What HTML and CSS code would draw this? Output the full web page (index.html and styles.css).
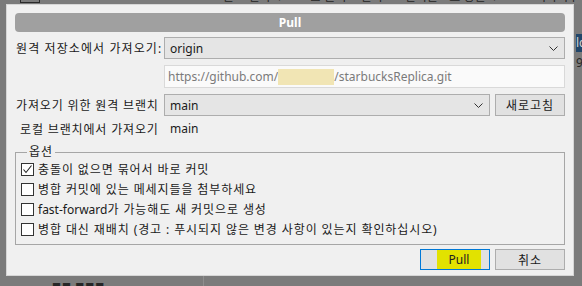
FILE: index.html
```html
<!DOCTYPE html>
<html lang="ko">
<head>
    <meta charset="UTF-8">
    <title>Pull</title>
    <link rel="stylesheet" href="styles.css">
</head>
<body>
    <!-- dimmed app window behind the dialog -->
    <div class="backdrop">
        <span class="bd-text bd-t1">모든 브랜치 ∨</span>
        <span class="bd-text bd-t2">☑ 원격 브랜치</span>
        <span class="bd-text bd-t3">날짜순으로 정렬 ∨</span>
        <span class="bd-text bd-t4">기다려주</span>
        <span class="bd-box"></span>
        <span class="bd-sel">lc</span>
        <span class="bd-text bd-t5">9</span>
        <span class="bd-line"></span>
        <span class="bd-text bd-t6">■■ ■■■</span>
    </div>

    <div class="dialog">
        <div class="titlebar">Pull</div>

        <div class="form-row row-remote">
            <label class="row-label">원격 저장소에서 가져오기:</label>
            <div class="combo">
                <span>origin</span>
                <svg class="chevron" width="9" height="5" viewBox="0 0 9 5"><polyline points="0.5,0.5 4.5,4.5 8.5,0.5" fill="none" stroke="#333" stroke-width="1"/></svg>
            </div>
        </div>

        <div class="form-row row-url">
            <span></span>
            <div class="url-box">
                <span>https://github.com/</span><span class="masked"></span><span>/starbucksReplica.git</span>
            </div>
        </div>

        <div class="form-row row-branch">
            <label class="row-label label-tight">가져오기 위한 원격 브랜치</label>
            <div class="branch-line">
                <div class="combo combo-branch">
                    <span>main</span>
                    <svg class="chevron" width="9" height="5" viewBox="0 0 9 5"><polyline points="0.5,0.5 4.5,4.5 8.5,0.5" fill="none" stroke="#333" stroke-width="1"/></svg>
                </div>
                <button class="btn">새로고침</button>
            </div>
        </div>

        <div class="form-row row-local">
            <span class="row-label label-tight local-label">로컬 브랜치에서 가져오기</span>
            <span class="local-value">main</span>
        </div>

        <fieldset class="options">
            <legend>옵션</legend>
            <label class="check-row">
                <span class="checkbox">
                    <svg width="11" height="11" viewBox="0 0 11 11"><polyline points="1.5,5.5 4,8.5 9.5,1.5" fill="none" stroke="#222" stroke-width="1.1"/></svg>
                </span>
                <span>충돌이 없으면 묶어서 바로 커밋</span>
            </label>
            <label class="check-row">
                <span class="checkbox"></span>
                <span>병합 커밋에 있는 메세지들을 첨부하세요</span>
            </label>
            <label class="check-row">
                <span class="checkbox"></span>
                <span><span class="latin">fast-forward</span>가 가능해도 새 커밋으로 생성</span>
            </label>
            <label class="check-row">
                <span class="checkbox"></span>
                <span>병합 대신 재배치 (경고 : 푸시되지 않은 변경 사항이 있는지 확인하십시오)</span>
            </label>
        </fieldset>

        <div class="actions">
            <button class="btn btn-default"><span class="marker">Pull</span></button>
            <button class="btn">취소</button>
        </div>
    </div>
</body>
</html>
```

FILE: styles.css
```css
* {
    margin: 0;
    padding: 0;
    box-sizing: border-box;
}

body {
    position: relative;
    width: 582px;
    height: 286px;
    overflow: hidden;
    background: #7b7b7b;
    font-family: "Noto Sans", "Noto Sans CJK KR", sans-serif;
    font-size: 12px;
    color: #1a1a1a;
}

/* ---------- backdrop ---------- */
.backdrop {
    position: absolute;
    inset: 0;
}

.bd-text {
    position: absolute;
    font-size: 12px;
    color: #262626;
    white-space: nowrap;
}

.bd-t1 { left: 212px; top: -13px; }
.bd-t2 { left: 310px; top: -13px; }
.bd-t3 { left: 405px; top: -13px; }
.bd-t4 { left: 535px; top: -13px; }
.bd-t5 { left: 576px; top: 54px; }
.bd-t6 { left: 52px; top: 280px; font-size: 9px; letter-spacing: 1px; }

.bd-box {
    position: absolute;
    left: 20px;
    top: -10px;
    width: 20px;
    height: 13px;
    border: 1px solid #2a2a2a;
}

.bd-sel {
    position: absolute;
    left: 576px;
    top: 34px;
    width: 10px;
    height: 18px;
    background: #21466a;
    color: #d0d0d0;
    font-size: 12px;
    line-height: 18px;
}

.bd-line {
    position: absolute;
    left: 203px;
    top: 276px;
    width: 1px;
    height: 10px;
    background: #8e8e8e;
}

/* ---------- dialog ---------- */
.dialog {
    position: absolute;
    left: 6px;
    top: 4px;
    width: 568px;
    height: 272px;
    background: #f0f0f0;
    border: 1px solid #d6d6d6;
    padding: 8px 8px 0 8px;
    display: flex;
    flex-direction: column;
}

.titlebar {
    height: 19px;
    background: #a0a0a0;
    border-radius: 4px;
    color: #ffffff;
    font-weight: bold;
    text-align: center;
    line-height: 19px;
    margin-bottom: 5px;
}

.form-row {
    display: grid;
    grid-template-columns: 149px 1fr;
    align-items: center;
}

.row-label {
    padding-left: 1px;
    white-space: nowrap;
    letter-spacing: 1.1px;
}

.label-tight {
    letter-spacing: 0.85px;
}

.row-remote {
    height: 22px;
    margin-bottom: 6px;
}

.combo {
    height: 22px;
    background: #e5e5e5;
    border: 1px solid #adadad;
    display: flex;
    align-items: center;
    justify-content: space-between;
    padding: 0 6px 0 5px;
}

.chevron {
    display: block;
}

.row-url {
    height: 23px;
    margin-bottom: 6px;
}

.url-box {
    height: 23px;
    background: #fafafa;
    border: 1px solid #d9d9d9;
    color: #7a7a7a;
    display: flex;
    align-items: center;
    padding-left: 3px;
}

.masked {
    display: inline-block;
    width: 56px;
    height: 16px;
    background: #f1e5b4;
}

.row-branch {
    height: 22px;
}

.branch-line {
    display: flex;
    gap: 5px;
}

.combo-branch {
    width: 326px;
}

.btn {
    width: 70px;
    height: 22px;
    background: #e1e1e1;
    border: 1px solid #adadad;
    font-family: inherit;
    font-size: 12px;
    color: #1a1a1a;
    letter-spacing: 1px;
}

.row-local {
    height: 25px;
}

.local-label {
    padding-left: 5px;
}

.local-value {
    padding-left: 6px;
}

/* ---------- options group ---------- */
.options {
    margin-top: 4px;
    height: 100px;
    border: 1px solid #a6a6a6;
    padding: 0 5px 0 5px;
}

.options legend {
    margin-left: 6px;
    padding: 0 2px;
    line-height: 14px;
    letter-spacing: 1px;
}

.check-row {
    display: flex;
    align-items: center;
    gap: 4px;
    height: 20px;
    white-space: nowrap;
    letter-spacing: 0.9px;
}

.latin {
    letter-spacing: 0;
}

.checkbox {
    width: 13px;
    height: 13px;
    border: 1px solid #333333;
    background: #ffffff;
    display: flex;
    align-items: center;
    justify-content: center;
    flex-shrink: 0;
}

.checkbox svg {
    display: block;
}

/* ---------- buttons ---------- */
.actions {
    display: flex;
    justify-content: flex-end;
    gap: 5px;
    margin-top: 4px;
}

.actions .btn {
    height: 21px;
}

.btn-default {
    border-color: #0078d7;
}

.marker {
    display: inline-block;
    width: 44px;
    margin-left: 8px;
    background: #e2e200;
    padding: 1px 0;
    letter-spacing: 0;
    color: #222222;
}
```
